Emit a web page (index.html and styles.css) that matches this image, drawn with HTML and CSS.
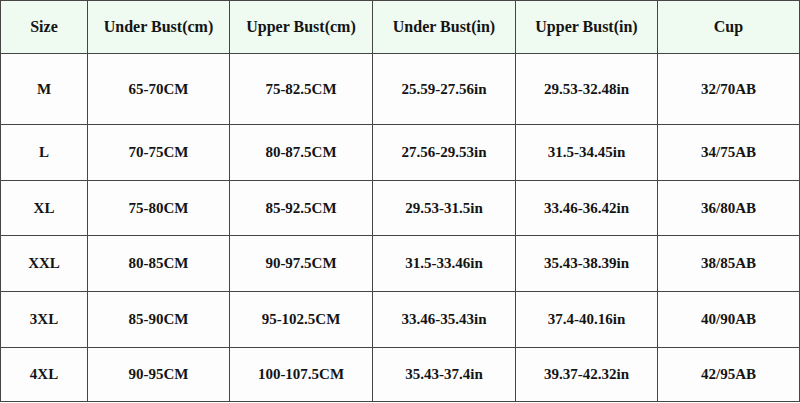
FILE: index.html
```html
<!DOCTYPE html>
<html>
<head>
<meta charset="utf-8">
<link rel="stylesheet" href="styles.css">
</head>
<body>
<div class="chart">
  <div class="cell head">Size</div>
  <div class="cell head">Under Bust(cm)</div>
  <div class="cell head">Upper Bust(cm)</div>
  <div class="cell head">Under Bust(in)</div>
  <div class="cell head">Upper Bust(in)</div>
  <div class="cell head">Cup</div>

  <div class="cell">M</div>
  <div class="cell">65-70CM</div>
  <div class="cell">75-82.5CM</div>
  <div class="cell">25.59-27.56in</div>
  <div class="cell">29.53-32.48in</div>
  <div class="cell">32/70AB</div>

  <div class="cell">L</div>
  <div class="cell">70-75CM</div>
  <div class="cell">80-87.5CM</div>
  <div class="cell">27.56-29.53in</div>
  <div class="cell">31.5-34.45in</div>
  <div class="cell">34/75AB</div>

  <div class="cell">XL</div>
  <div class="cell">75-80CM</div>
  <div class="cell">85-92.5CM</div>
  <div class="cell">29.53-31.5in</div>
  <div class="cell">33.46-36.42in</div>
  <div class="cell">36/80AB</div>

  <div class="cell">XXL</div>
  <div class="cell">80-85CM</div>
  <div class="cell">90-97.5CM</div>
  <div class="cell">31.5-33.46in</div>
  <div class="cell">35.43-38.39in</div>
  <div class="cell">38/85AB</div>

  <div class="cell">3XL</div>
  <div class="cell">85-90CM</div>
  <div class="cell">95-102.5CM</div>
  <div class="cell">33.46-35.43in</div>
  <div class="cell">37.4-40.16in</div>
  <div class="cell">40/90AB</div>

  <div class="cell">4XL</div>
  <div class="cell">90-95CM</div>
  <div class="cell">100-107.5CM</div>
  <div class="cell">35.43-37.4in</div>
  <div class="cell">39.37-42.32in</div>
  <div class="cell">42/95AB</div>
</div>
</body>
</html>
```

FILE: styles.css
```css
html, body {
  margin: 0;
  padding: 0;
  background: #ffffff;
}

.chart {
  width: 798px;
  padding: 1px;
  background: #464646;
  display: grid;
  grid-template-columns: 86px 141px 142px 142px 141px 141px;
  grid-template-rows: 52px 70px 55px 54px 55px 55px 53px;
  gap: 1px;
  font-family: "Liberation Serif", "Times New Roman", serif;
  font-weight: bold;
  font-size: 15px;
  color: #141414;
}

.cell {
  background: #fdfdfd;
  display: flex;
  align-items: center;
  justify-content: center;
  text-align: center;
}

.head {
  background: #effaf1;
  font-size: 16px;
}
```
